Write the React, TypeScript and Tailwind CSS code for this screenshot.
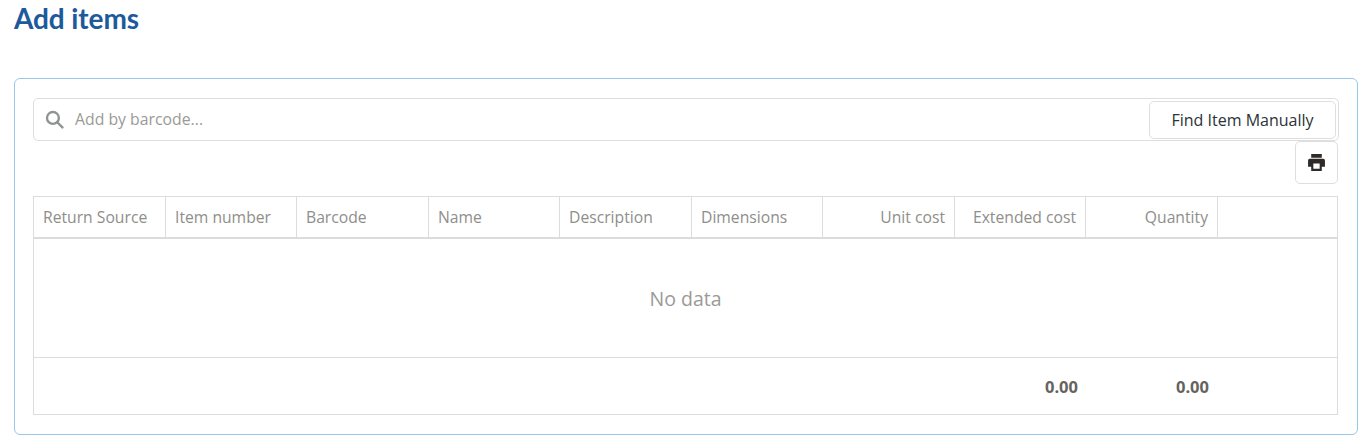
import React from 'react';

const COLUMNS = [
  { label: 'Return Source' },
  { label: 'Item number' },
  { label: 'Barcode' },
  { label: 'Name' },
  { label: 'Description' },
  { label: 'Dimensions' },
  { label: 'Unit cost', right: true },
  { label: 'Extended cost', right: true },
  { label: 'Quantity', right: true },
];

const GRID = 'grid grid-cols-[132px_131px_132px_131px_132px_131px_132px_131px_132px_1fr]';

const App: React.FC = () => {
  return (
    <div className="h-[444px] w-[1368px] overflow-hidden bg-white font-['Open_Sans',sans-serif]">
      <h1 className="pl-[14px] pt-[2px] font-['Lato',sans-serif] text-[28px] font-bold leading-[33px] tracking-[-0.1px] text-[#1c5a9c]">
        Add items
      </h1>

      <div className="ml-[14px] mt-[43px] h-[357px] w-[1344px] rounded-[6px] border border-[#9ac6ea] px-[18px] pt-[19px]">
        <div className="flex h-[43px] items-center rounded-[5px] border border-[#dedede] pr-[2px]">
          <svg className="ml-[11px] h-[19px] w-[19px] text-[#8f9492]" viewBox="0 0 24 24" fill="none" stroke="currentColor" strokeWidth="3">
            <circle cx="10" cy="10" r="7.5" />
            <path d="M15.5 15.5 22 22" strokeLinecap="round" />
          </svg>
          <input
            className="ml-[11px] flex-1 bg-transparent text-[15.8px] text-[#555] outline-none placeholder:text-[#9a9a96]"
            placeholder="Add by barcode..."
          />
          <button className="h-[38px] w-[187px] rounded-[5px] border border-[#dedede] bg-white text-center text-[16px] text-[#2b3238]">
            Find Item Manually
          </button>
        </div>

        <div className="flex justify-end pr-[1px]">
          <button className="flex h-[43px] w-[43px] items-center justify-center rounded-[5px] border border-[#dedede] bg-white">
            <svg className="h-[19px] w-[19px]" viewBox="0 0 18 18" fill="#2e2a28">
              <path fillRule="evenodd" d="M4 1h10v3.5H4zM2.5 5.5h13A1.5 1.5 0 0 1 17 7v6h-3v4H4v-4H1V7a1.5 1.5 0 0 1 1.5-1.5zM6 10v5h6v-5z" />
            </svg>
          </button>
        </div>

        <div className="mt-[12px] w-[1305px] border border-[#dcdcdc]">
          <div className={`${GRID} h-[42px] border-b-2 border-[#dcdcdc] text-[15.7px] text-[#8e8e8a]`}>
            {COLUMNS.map(col => (
              <div
                key={col.label}
                className={`flex items-center whitespace-nowrap border-r border-[#dcdcdc] pt-[1px] ${col.right ? 'justify-end pr-[9px]' : 'pl-[9px]'}`}
              >
                {col.label}
              </div>
            ))}
            <div />
          </div>

          <div className="flex h-[119px] items-center justify-center border-b border-[#dcdcdc] pt-[1px] text-[19.5px] text-[#9a9a96]">
            No data
          </div>

          <div className={`${GRID} h-[56px] items-center pt-[3px] text-[16.5px] font-bold text-[#66635f]`}>
            <div className="col-start-8 pr-[8px] text-right">0.00</div>
            <div className="col-start-9 pr-[9px] text-right">0.00</div>
          </div>
        </div>
      </div>
    </div>
  );
};

export default App;
